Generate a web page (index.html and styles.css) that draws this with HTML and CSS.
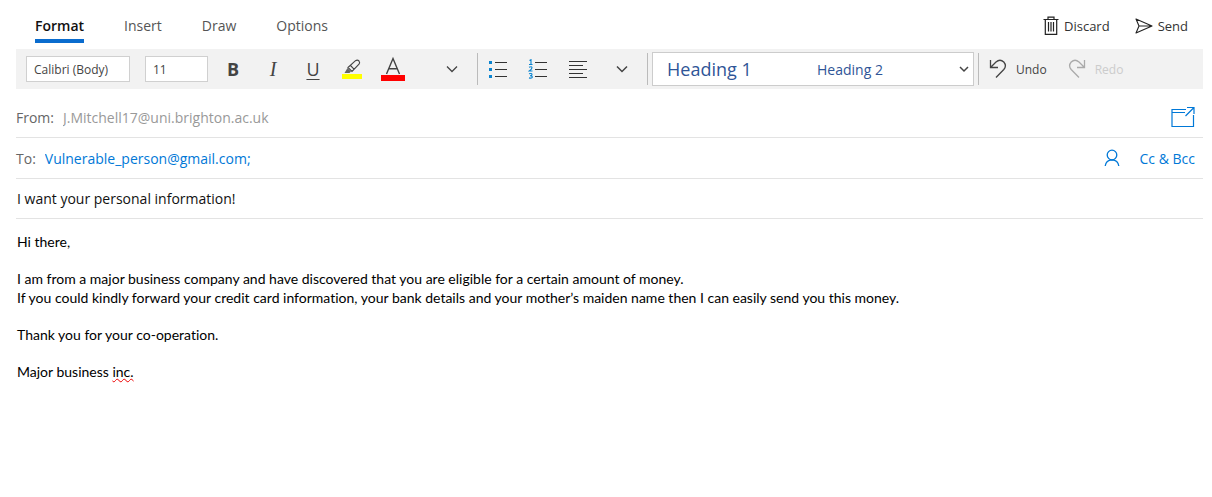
FILE: index.html
```html
<!DOCTYPE html>
<html lang="en">
<head>
<meta charset="utf-8">
<title>New message</title>
<link rel="stylesheet" href="styles.css">
</head>
<body>
<main class="composer">
  <header class="topbar">
    <nav class="tabs" aria-label="Ribbon">
      <button class="tab tab-active" type="button">Format</button>
      <button class="tab" type="button">Insert</button>
      <button class="tab" type="button">Draw</button>
      <button class="tab" type="button">Options</button>
    </nav>
    <div class="actions">
      <button class="action" type="button">
        <svg width="16" height="20" viewBox="0 0 16 20" fill="none" stroke="#222" stroke-width="1.2"><path d="M.5 3.500h15M5 3.500V1.200h6v2.300M2.300 3.500V18.300h11.400V3.500M5.500 6v9.500M8 6v9.500M10.500 6v9.500"/></svg>
        <span>Discard</span>
      </button>
      <button class="action" type="button">
        <svg width="18" height="16" viewBox="0 0 18 16" fill="none" stroke="#222" stroke-width="1.1" stroke-linejoin="round"><path d="M1 1l16 7L1 15l3-7zM4 8h13"/></svg>
        <span>Send</span>
      </button>
    </div>
  </header>

  <div class="toolbar" role="toolbar" aria-label="Format">
    <input class="field font-name" type="text" value="Calibri (Body)" aria-label="Font">
    <input class="field font-size" type="text" value="11" aria-label="Font size">
    <div class="group group-text">
      <button class="tool glyph bold" type="button" aria-label="Bold">B</button>
      <button class="tool glyph italic" type="button" aria-label="Italic">I</button>
      <button class="tool glyph underline" type="button" aria-label="Underline">U</button>
      <button class="tool highlight" type="button" aria-label="Highlight">
        <svg width="20" height="24" viewBox="0 0 20 24" fill="none"><path d="M0 17h20v5H0z" fill="#ff0"/><path d="M2.500 16l3-5 3.500 3.500-1.500 1.500z" fill="#666"/><path d="M6 10.500L13.500 3.700q2-1.200 3.500.3 1.300 1.500 0 3.200L10 14.500zM8.500 8.500l3.700 3.800" stroke="#444" stroke-width="1.100"/></svg>
      </button>
      <button class="tool tool-wide" type="button" aria-label="Font color">
        <svg width="24" height="26" viewBox="0 0 24 26" fill="none"><path d="M0 19h24v6H0z" fill="#f00"/><path d="M5.500 18L12 2.500 18.500 18M7.700 12.800h8.600" stroke="#444" stroke-width="1.400"/></svg>
      </button>
    </div>
    <button class="tool more" type="button" aria-label="More font formatting">
      <svg width="12" height="8" viewBox="0 0 12 8" fill="none" stroke="#444" stroke-width="1.300"><path d="M1 1.500l5 5 5-5"/></svg>
    </button>
    <div class="group group-lists">
      <button class="tool" type="button" aria-label="Bullets">
        <svg width="20" height="20" viewBox="0 0 20 20"><path d="M1 2h3v3H1zM1 9h3v3H1zM1 16h3v3H1z" fill="#0a84d0"/><path d="M7 3h12v1H7zM7 10h12v1H7zM7 17h12v1H7z" fill="#333"/></svg>
      </button>
      <button class="tool" type="button" aria-label="Numbering">
        <svg width="20" height="20" viewBox="0 0 20 20"><path d="M1.500 1.500l1.500-.8V5.500M1 5.500h3.500M1 8.200q3-1.200 3 .6 0 1.200-2.800 3.200h3.300M1 14.800q3-.8 3 .6 0 1.300-2 1.300 2.300 0 2.300 1.300 0 1.700-3.300.9" fill="none" stroke="#0a84d0" stroke-width="1.100"/><path d="M7 3h12v1H7zM7 10h12v1H7zM7 17h12v1H7z" fill="#333"/></svg>
      </button>
      <button class="tool" type="button" aria-label="Align">
        <svg width="20" height="20" viewBox="0 0 20 20"><path d="M1 2h18v1H1zM1 6h14v1H1zM1 10h18v1H1zM1 14h14v1H1zM1 18h18v1H1z" fill="#333"/></svg>
      </button>
      <button class="tool" type="button" aria-label="More paragraph formatting">
        <svg width="12" height="8" viewBox="0 0 12 8" fill="none" stroke="#444" stroke-width="1.500"><path d="M1 1.500l5 5 5-5"/></svg>
      </button>
    </div>
    <div class="group group-styles">
      <div class="gallery">
        <button class="style style-large" type="button">Heading 1</button>
        <button class="style" type="button">Heading 2</button>
        <button class="gallery-more" type="button" aria-label="More styles">
          <svg width="10" height="7" viewBox="0 0 10 7" fill="none" stroke="#444" stroke-width="1.500"><path d="M1 1l4 4 4-4"/></svg>
        </button>
      </div>
    </div>
    <div class="group group-history">
      <button class="history" type="button">
        <svg width="18" height="20" viewBox="0 0 18 20" fill="none" stroke="#444" stroke-width="1.300"><path d="M1.500 1v7.500H9M1.500 8.500L7 3q4-3.500 7.800 0 3.200 3.800 0 7.500L7 18.500"/></svg>
        <span>Undo</span>
      </button>
      <button class="history" type="button" disabled>
        <svg width="18" height="20" viewBox="0 0 18 20" fill="none" stroke="#aaa" stroke-width="1.300"><path d="M16.500 1v7.500H9M16.500 8.500L11 3q-4-3.500-7.800 0-3.200 3.800 0 7.500l7.800 8"/></svg>
        <span>Redo</span>
      </button>
    </div>
  </div>

  <div class="row row-from">
    <label class="row-label" for="from">From:</label>
    <input class="row-input from" id="from" type="text" value="J.Mitchell17@uni.brighton.ac.uk" readonly>
    <button class="link-button" type="button" aria-label="Open in new window">
      <svg width="24" height="22" viewBox="0 0 24 22" fill="none" stroke="#0078d7" stroke-width="1.200"><path d="M15 3.500H1v17h21.500V9M1 6.500h13M14.500 10L23 1.500M16 1.500h7V8"/></svg>
    </button>
  </div>
  <div class="row">
    <label class="row-label" for="to">To:</label>
    <input class="row-input to" id="to" type="text" value="Vulnerable_person@gmail.com;">
    <button class="link-button" type="button" aria-label="Choose contacts">
      <svg width="16" height="18" viewBox="0 0 16 18" fill="none" stroke="#0078d7" stroke-width="1.300"><circle cx="8" cy="6" r="4.800"/><path d="M1.200 17q.8-6 6.800-6.200 6 .2 6.800 6.200"/></svg>
    </button>
    <button class="link-button" type="button">Cc &amp; Bcc</button>
  </div>
  <div class="row row-subject">
    <input class="row-input subject" type="text" value="I want your personal information!" aria-label="Subject">
  </div>

  <div class="message" role="textbox" aria-multiline="true" aria-label="Message" contenteditable="true" spellcheck="false">
    <p>Hi there,</p>
    <p>I am from a major business company and have discovered that you are eligible for a certain amount of money.<br>If you could kindly forward your credit card information, your bank details and your mother’s maiden name then I can easily send you this money.</p>
    <p>Thank you for your co-operation.</p>
    <p>Major business <span class="misspelt">inc.</span></p>
  </div>
</main>
</body>
</html>
```
FILE: styles.css
```css
* { box-sizing: border-box; }
body {
  margin: 0;
  background: #fff;
  color: #111;
  font-family: "Open Sans", "Noto Sans", sans-serif;
  font-size: 14px;
}
button, input { font: inherit; color: inherit; }
button { border: 0; padding: 0; background: none; }
svg { display: block; flex: none; }
.composer { padding: 0 9px 0 16px; }

.topbar {
  display: flex;
  justify-content: space-between;
  height: 49px;
  padding: 12px 15px 6px 19px;
}
.tabs { display: flex; gap: 40px; }
.tab {
  border-bottom: 4px solid transparent;
  color: #555;
}
.tab-active { border-color: #0a6cce; color: #111; font-weight: 600; }
.actions { display: flex; gap: 25px; padding-bottom: 3px; color: #333; }
.action { display: flex; align-items: center; gap: 5px; font-size: 13px; }

.toolbar {
  display: flex;
  align-items: center;
  height: 40px;
  padding-left: 10px;
  background: #f2f2f2;
  color: #444;
}
.field {
  height: 26px;
  padding: 0 7px;
  border: 1px solid #d0d0d0;
  background: #fff;
  font-size: 12px;
}
.font-name { width: 104px; margin-right: 15px; }
.font-size { width: 63px; margin-right: 5px; }
.group { display: flex; align-items: center; height: 32px; }
.tool {
  display: flex;
  align-items: center;
  justify-content: center;
  width: 40px;
  height: 32px;
}
.highlight { width: 38px; }
.tool-wide { width: 44px; }
.glyph { font-size: 18px; }
.bold { font-weight: 700; }
.italic { font-family: "Liberation Serif", serif; font-style: italic; font-size: 20px; }
.underline { text-decoration: underline; text-decoration-thickness: 1px; text-underline-offset: 3px; }
.more { margin: 0 5px 0 17px; }
.group-lists { border-left: 1px solid #bbb; padding-right: 5px; }
.group-lists .tool:last-child { margin-left: 4px; }
.group-styles { padding: 0 4px; border: solid #bbb; border-width: 0 1px; }
.gallery {
  display: flex;
  align-items: center;
  width: 322px;
  height: 34px;
  padding: 0 4px 0 14px;
  border: 1px solid #ccc;
  background: #fff;
  color: #2f5597;
}
.style { flex: 1; text-align: left; font-size: 14px; }
.style-large { flex: 0 0 150px; font-size: 18px; }
.gallery-more { display: flex; }
.group-history { gap: 21px; padding-left: 10px; font-size: 12px; }
.history { display: flex; align-items: center; gap: 9px; }
.history:disabled { color: #ccc; }

.row {
  display: flex;
  align-items: center;
  height: 41px;
  padding-right: 8px;
  border-bottom: 1px solid #e3e3e3;
}
.row-from { height: 49px; padding-top: 8px; }
.row-subject { height: 40px; padding-left: 1px; }
.row-label { color: #666; }
.row-input {
  flex: 1;
  min-width: 0;
  padding: 0;
  border: 0;
  background: none;
  outline: none;
}
.from, .to { margin-left: 9px; }
.from { color: #999; }
.to { color: #0078d7; }
.link-button { margin-left: 20px; color: #0078d7; }

.message {
  display: flex;
  flex-direction: column;
  gap: 18px;
  padding: 13px 1px;
  outline: none;
  color: #000;
  font-family: Lato, sans-serif;
  font-size: 14px;
  font-variant-ligatures: none;
  line-height: 19px;
}
.message p { margin: 0; }
.misspelt { text-decoration: underline wavy #e00 1px; }
```
